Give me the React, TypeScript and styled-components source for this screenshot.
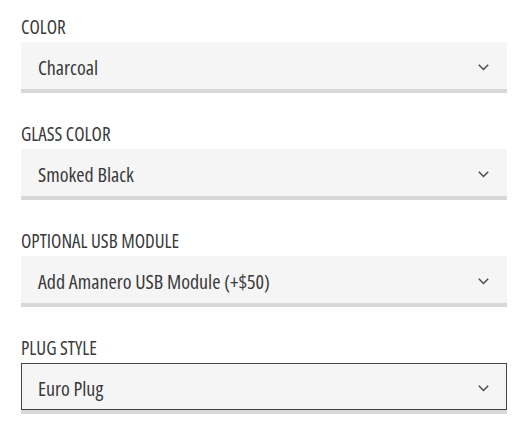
import React from "react";
import styled, { createGlobalStyle } from "styled-components";

const GlobalStyle = createGlobalStyle`
    body {
        margin: 0;
        background: #fff;
        font-family: "Open Sans", "DejaVu Sans Condensed", sans-serif;
        font-stretch: 75%;
        font-weight: 400;
        color: #3a3a3a;
    }
`;

const Form = styled.div`
    display: flex;
    flex-direction: column;
    gap: 30px;
    padding: 16px 15px 0 21px;
`;

const Field = styled.div`
    display: flex;
    flex-direction: column;
    gap: 4px;
`;

const Label = styled.label`
    font-size: 19px;
    line-height: 22px;
    text-transform: uppercase;
    color: #3a3a3a;
`;

type SelectBoxProps = {
    $focused?: boolean,
}

const SelectBox = styled.div<SelectBoxProps>`
    display: flex;
    align-items: center;
    justify-content: space-between;
    box-sizing: border-box;
    height: 47px;
    margin-bottom: 4px;
    padding: 3px 17px 0 16px;
    background: #f5f5f5;
    border: 1px solid ${p => p.$focused ? "#444" : "transparent"};
    box-shadow: 0 4px 0 #d8d8d8;
`;

const Value = styled.span`
    font-size: 20px;
    color: #3a3a3a;
`;

const Chevron = () => (
    <svg width="11" height="7" viewBox="0 0 11 7" fill="none">
        <path d="M0.8 0.8l4.7 4.7 4.7-4.7" stroke="#4a4a4a" strokeWidth="1.5" />
    </svg>
);

type Option = {
    label: string,
    value: string,
    focused?: boolean,
}

const fields: Option[] = [
    { label: "Color", value: "Charcoal" },
    { label: "Glass Color", value: "Smoked Black" },
    { label: "Optional USB Module", value: "Add Amanero USB Module (+$50)" },
    { label: "Plug Style", value: "Euro Plug", focused: true },
];

export default function App(): JSX.Element {
    return (
        <>
            <GlobalStyle />
            <Form>
                {fields.map(f => (
                    <Field key={f.label}>
                        <Label>{f.label}</Label>
                        <SelectBox $focused={f.focused}>
                            <Value>{f.value}</Value>
                            <Chevron />
                        </SelectBox>
                    </Field>
                ))}
            </Form>
        </>
    );
}
